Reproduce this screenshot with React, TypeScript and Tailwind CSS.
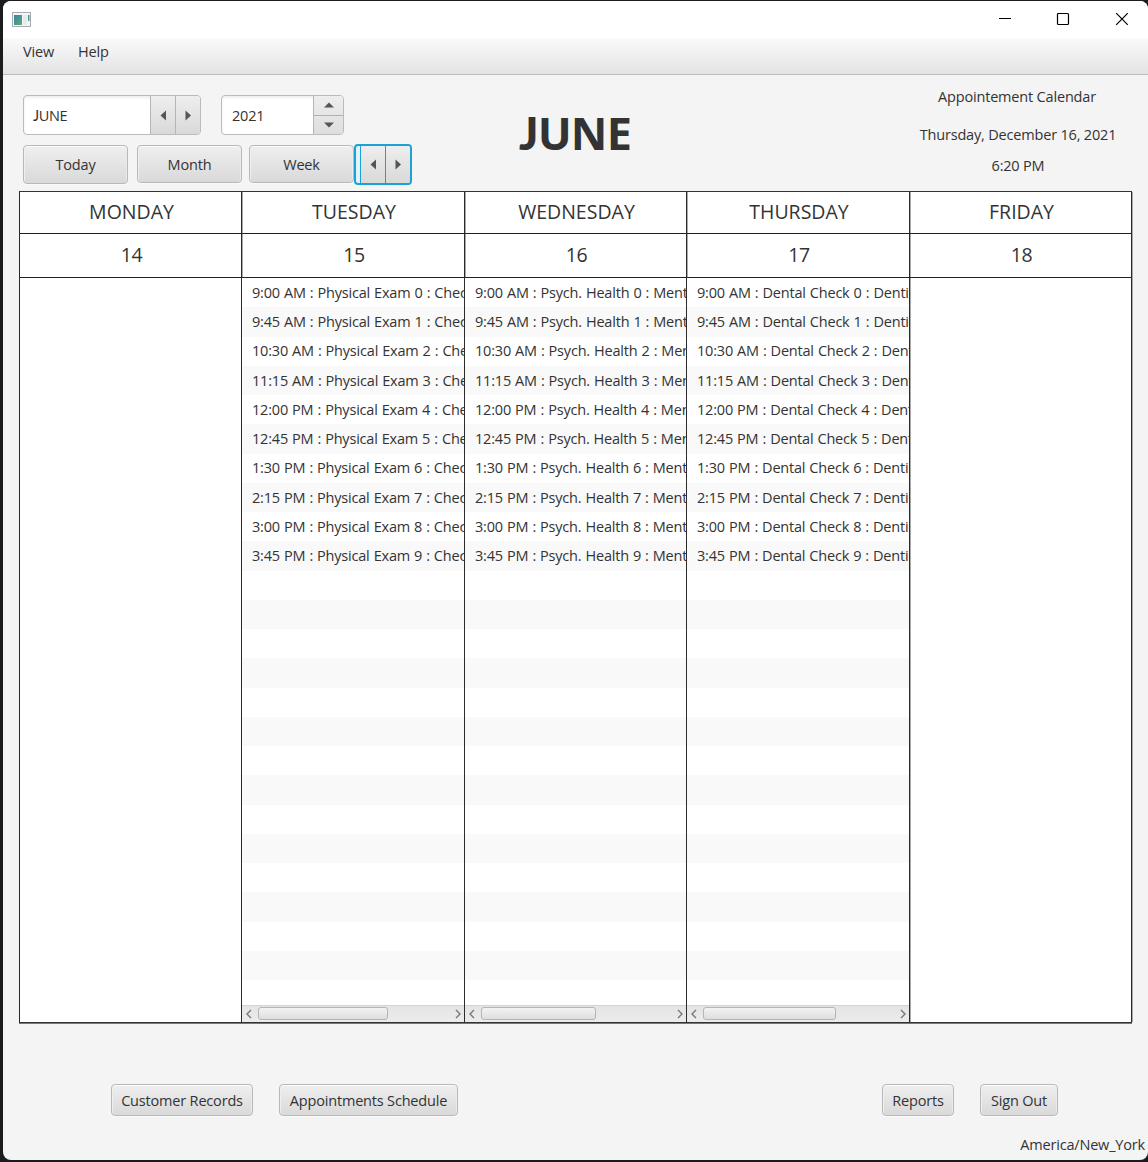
import React from "react";

const days = [
  { name: "MONDAY", date: "14", w: "w-[223px]", items: [] as string[], thumb: "" },
  {
    name: "TUESDAY", date: "15", w: "w-[223px]", thumb: "w-[130px]",
    items: [
      "9:00 AM : Physical Exam 0 : Checkup",
      "9:45 AM : Physical Exam 1 : Checkup",
      "10:30 AM : Physical Exam 2 : Checkup",
      "11:15 AM : Physical Exam 3 : Checkup",
      "12:00 PM : Physical Exam 4 : Checkup",
      "12:45 PM : Physical Exam 5 : Checkup",
      "1:30 PM : Physical Exam 6 : Checkup",
      "2:15 PM : Physical Exam 7 : Checkup",
      "3:00 PM : Physical Exam 8 : Checkup",
      "3:45 PM : Physical Exam 9 : Checkup",
    ],
  },
  {
    name: "WEDNESDAY", date: "16", w: "w-[222px]", thumb: "w-[115px]",
    items: [
      "9:00 AM : Psych. Health 0 : Mental",
      "9:45 AM : Psych. Health 1 : Mental",
      "10:30 AM : Psych. Health 2 : Mental",
      "11:15 AM : Psych. Health 3 : Mental",
      "12:00 PM : Psych. Health 4 : Mental",
      "12:45 PM : Psych. Health 5 : Mental",
      "1:30 PM : Psych. Health 6 : Mental",
      "2:15 PM : Psych. Health 7 : Mental",
      "3:00 PM : Psych. Health 8 : Mental",
      "3:45 PM : Psych. Health 9 : Mental",
    ],
  },
  {
    name: "THURSDAY", date: "17", w: "w-[223px]", thumb: "w-[133px]",
    items: [
      "9:00 AM : Dental Check 0 : Dentist",
      "9:45 AM : Dental Check 1 : Dentist",
      "10:30 AM : Dental Check 2 : Dentist",
      "11:15 AM : Dental Check 3 : Dentist",
      "12:00 PM : Dental Check 4 : Dentist",
      "12:45 PM : Dental Check 5 : Dentist",
      "1:30 PM : Dental Check 6 : Dentist",
      "2:15 PM : Dental Check 7 : Dentist",
      "3:00 PM : Dental Check 8 : Dentist",
      "3:45 PM : Dental Check 9 : Dentist",
    ],
  },
  { name: "FRIDAY", date: "18", w: "w-[222px]", items: [] as string[], thumb: "" },
];

const face =
  "rounded-[4px] border border-[#b8b8b8] bg-linear-to-b from-[#efefef] to-[#d9d9d9] shadow-[inset_0_1px_0_#fbfbfb,inset_1px_0_0_#efefef,inset_-1px_0_0_#ececec,0_1px_0_#fafafa]";

function Button({ label, size }: { label: string; size: string }) {
  return <button className={`flex items-center justify-center whitespace-nowrap pt-[2px] ${face} ${size}`}>{label}</button>;
}

function Arrow({ dir }: { dir: "left" | "right" | "up" | "down" }) {
  const d = {
    left: "M6 0.5V10.5L0.5 5.5Z",
    right: "M0.5 0.5V10.5L6 5.5Z",
    up: "M0 5.5H10L5 0.5Z",
    down: "M0 0.5H10L5 5.5Z",
  }[dir];
  const flat = dir === "up" || dir === "down";
  return (
    <svg width={flat ? 10 : 6} height={flat ? 6 : 11} className="block shrink-0" fill="#555">
      <path d={d} />
    </svg>
  );
}

function Column({ day, first }: { day: (typeof days)[number]; first: boolean }) {
  return (
    <div className={`flex shrink-0 flex-col border-r border-[#2b2b2b] shadow-[1px_0_0_#aaa] ${day.w} ${first ? "border-l" : ""}`}>
      <div className="flex h-[42px] items-center justify-center border-b border-[#222] pb-[1px] pl-[2px] text-[19.5px] tracking-[0px]">{day.name}</div>
      <div className="flex h-[44px] items-center justify-center border-b border-[#222] pb-[1px] pl-[2px] text-[19.5px] tracking-[-0.35px]">{day.date}</div>
      {day.items.length > 0 && (
        <>
          <div className="h-[727px] overflow-hidden">
            {Array.from({ length: 25 }, (_, i) => (
              <div
                key={i}
                className="flex h-[29.25px] items-center overflow-hidden pt-px pl-[10px] whitespace-nowrap odd:bg-white even:bg-[#f9f9f9] tracking-[-0.2px] [word-spacing:0.5px]"
              >
                {day.items[i]}
              </div>
            ))}
          </div>
          <div className="flex h-[17px] items-center border-t border-[#d4d4d4] bg-linear-to-b from-[#e4e4e4] to-[#ececec] px-1 pb-px">
            <svg width="6" height="10" fill="none" stroke="#777" strokeWidth="1.4"><path d="M5 1L1 5L5 9" /></svg>
            <div className={`ml-[6px] h-[13px] rounded-[3px] border border-[#b5b5b5] bg-linear-to-b from-[#f3f3f3] to-[#dedede] ${day.thumb}`} />
            <svg className="ml-auto -mr-[1px]" width="6" height="10" fill="none" stroke="#777" strokeWidth="1.4"><path d="M1 1L5 5L1 9" /></svg>
          </div>
        </>
      )}
    </div>
  );
}

export default function App() {
  return (
    <div className="h-[1162px] w-[1148px] overflow-hidden bg-[#1c1b1e] pt-px pb-[2px] pl-[3px] font-['Open_Sans','Noto_Sans',sans-serif] text-[14.5px] leading-none tracking-[-0.18px] text-[#333]">
      <div className="flex h-full flex-col overflow-hidden rounded-[8px] bg-[#f4f4f4]">
        <header className="flex h-[37px] shrink-0 items-center bg-white pb-px pl-[9px]">
          <svg width="19" height="15" viewBox="0 0 19 15">
            <defs>
              <linearGradient id="app" x1="0" y1="0" x2="1" y2="1">
                <stop offset="0" stopColor="#407fa5" />
                <stop offset="1" stopColor="#5aae74" />
              </linearGradient>
            </defs>
            <rect x="0.5" y="0.5" width="18" height="14" fill="#f5f6f7" stroke="#a5abb1" />
            <rect x="2" y="3" width="8" height="10" fill="url(#app)" />
            <rect x="11" y="3" width="4" height="10" fill="#e9e9e9" />
            <rect x="16" y="3" width="1.5" height="6" fill="url(#app)" />
          </svg>
          <svg className="ml-auto mr-[19px]" width="132" height="14" fill="none" stroke="#000" strokeWidth="1.2">
            <path d="M2 6.5H14" />
            <rect x="60.5" y="1.5" width="11" height="11" rx="1" />
            <path d="M119.2 1.2L130.8 12.8M130.8 1.2L119.2 12.8" />
          </svg>
        </header>
        <nav className="flex h-[37px] shrink-0 gap-6 border-b border-[#bcbcbc] bg-linear-to-b from-[#fafafa] to-[#e3e3e3] pt-[7px] pl-5 leading-[14px]">
          <span>View</span>
          <span>Help</span>
        </nav>

        <div className="flex h-[116px] shrink-0 pt-5 pl-5">
          <div className="w-[496px]">
            <div className="flex h-[40px]">
              <div className="flex h-[40px] w-[178px] overflow-hidden rounded-[4px] border border-[#bbb] bg-white shadow-[inset_0_2px_3px_#eee]">
                <div className="flex flex-1 items-center pt-[2px] pl-[9px] tracking-[-0.4px]"><span className="font-['Lato',sans-serif]">J</span>UNE</div>
                <div className="flex w-[25px] items-center justify-center border-l border-[#b5b5b5] bg-linear-to-b from-[#eee] to-[#d9d9d9]"><Arrow dir="left" /></div>
                <div className="flex w-[25px] items-center justify-center border-l border-[#b5b5b5] bg-linear-to-b from-[#eee] to-[#d9d9d9]"><Arrow dir="right" /></div>
              </div>
              <div className="ml-5 flex h-[40px] w-[123px] overflow-hidden rounded-[4px] border border-[#bbb] bg-white shadow-[inset_0_2px_3px_#eee]">
                <div className="flex flex-1 items-center pt-[2px] pl-[10px]">2021</div>
                <div className="flex w-[30px] flex-col border-l border-[#b5b5b5] bg-linear-to-b from-[#eee] to-[#dedede]">
                  <div className="flex flex-1 items-center justify-center border-b border-[#b0b0b0]"><Arrow dir="up" /></div>
                  <div className="flex flex-1 items-center justify-center"><Arrow dir="down" /></div>
                </div>
              </div>
            </div>
            <div className="mt-[10px] flex">
              <Button label="Today" size="w-[105px] h-[39px]" />
              <Button label="Month" size="w-[105px] h-[38px] ml-[9px]" />
              <Button label="Week" size="w-[105px] h-[38px] ml-[7px]" />
              <div className="-mt-px flex h-[41px] w-[58px] overflow-hidden rounded-[4px] border-2 border-[#1ba1d6] bg-[#e4f3fa]">
                <div className="flex-1" />
                <div className="flex w-[25px] items-center justify-center border-l border-[#1ba1d6] bg-linear-to-b from-[#eee] to-[#d9d9d9]"><Arrow dir="left" /></div>
                <div className="flex w-[25px] items-center justify-center border-l border-[#1ba1d6] bg-linear-to-b from-[#eee] to-[#d9d9d9]"><Arrow dir="right" /></div>
              </div>
            </div>
          </div>
          <h1 className="pt-[15px] text-[45px] leading-[45px] font-bold tracking-[-0.8px]"><span className="font-['Lato',sans-serif] font-black">J</span>UNE</h1>
          <div className="ml-auto mr-[32px] flex w-[196px] flex-col items-center whitespace-nowrap">
            <span className="-mt-[5px] -ml-[2px]">Appointement Calendar</span>
            <span className="mt-[23px]">Thursday, December 16, 2021</span>
            <span className="mt-[17px]">6:20 PM</span>
          </div>
        </div>

        <main className="ml-4 flex h-[832px] w-[1113px] shrink-0 border-t border-b border-[#333] bg-white shadow-[0_1px_0_#777]">
          {days.map((d, i) => (
            <Column key={d.name} day={d} first={i === 0} />
          ))}
        </main>

        <footer className="mt-[61px] flex shrink-0 pl-[108px]">
          <Button label="Customer Records" size="h-8 w-[142px]" />
          <Button label="Appointments Schedule" size="h-8 w-[179px] ml-[26px]" />
          <Button label="Reports" size="h-8 w-[72px] ml-auto" />
          <Button label="Sign Out" size="h-8 w-[78px] ml-[26px] mr-[90px]" />
        </footer>
        <div className="mt-[22px] mr-[3px] self-end">America/New_York</div>
      </div>
    </div>
  );
}
